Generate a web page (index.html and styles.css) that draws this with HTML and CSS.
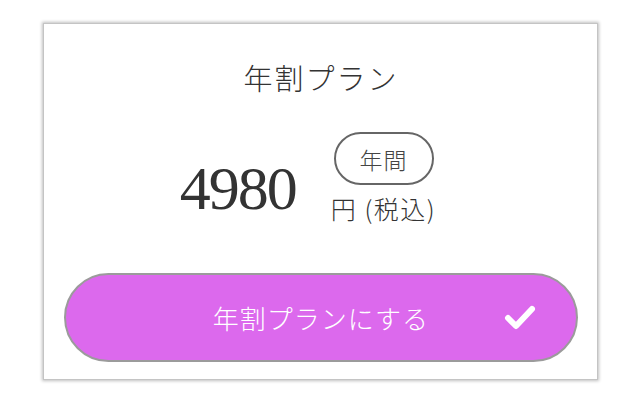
FILE: index.html
```html
<!DOCTYPE html>
<html lang="ja">
<head>
<meta charset="utf-8">
<link rel="stylesheet" href="styles.css">
</head>
<body>
<div class="card">
  <h1 class="title">年割プラン</h1>
  <div class="price-row">
    <span class="amount">4980</span>
    <div class="side">
      <span class="badge">年間</span>
      <span class="unit">円 (税込)</span>
    </div>
  </div>
  <button class="cta">
    <span class="cta-label">年割プランにする</span>
    <svg class="check" viewBox="0 0 32 28" width="32" height="28" aria-hidden="true">
      <path d="M4 15 L12 23 L28 6" fill="none" stroke="#fff" stroke-width="6" stroke-linecap="round" stroke-linejoin="round"/>
    </svg>
  </button>
</div>
</body>
</html>
```
FILE: styles.css
```css
html, body {
  margin: 0;
  padding: 0;
  background: #fff;
}
body {
  padding: 23px 0 24px 43px;
  font-family: "Noto Sans CJK JP", sans-serif;
}
.card {
  width: 555px;
  height: 357px;
  box-sizing: border-box;
  background: #fff;
  border: 1px solid #c4c4c4;
  box-shadow: 0 0 3px 1px rgba(0,0,0,0.25);
  display: flex;
  flex-direction: column;
  align-items: stretch;
  padding: 0 19px 0 20px;
}
.title {
  margin: 36px 0 0;
  text-align: center;
  font-size: 29px;
  font-weight: 300;
  line-height: 34px;
  color: #333;
  letter-spacing: 2px;
}
.price-row {
  display: flex;
  justify-content: center;
  align-items: flex-end;
  margin-top: 36px;
  padding-right: 26px;
  gap: 35px;
  height: 95px;
}
.amount {
  font-family: "Liberation Serif", serif;
  font-size: 62px;
  line-height: 62px;
  letter-spacing: -2px;
  color: #333;
  margin-bottom: 6px;
}
.side {
  display: flex;
  flex-direction: column;
  align-items: center;
}
.badge {
  width: 100px;
  height: 53px;
  box-sizing: border-box;
  border: 2px solid #666;
  border-radius: 27px;
  display: flex;
  align-items: center;
  justify-content: center;
  font-size: 23px;
  font-weight: 300;
  letter-spacing: 1px;
  color: #444;
}
.unit {
  margin-top: 6px;
  font-size: 25px;
  font-weight: 300;
  line-height: 34px;
  letter-spacing: 1.5px;
  color: #333;
}
.cta {
  margin-top: auto;
  margin-bottom: 17px;
  height: 89px;
  border: 2px solid #9b9b9b;
  border-radius: 45px;
  background: #dc69ed;
  position: relative;
  display: flex;
  align-items: center;
  justify-content: center;
  font-family: inherit;
  padding: 0;
}
.cta-label {
  color: #fff;
  font-size: 26px;
  font-weight: 300;
  letter-spacing: 1px;
}
.check {
  position: absolute;
  right: 40px;
  top: 28px;
}
```
